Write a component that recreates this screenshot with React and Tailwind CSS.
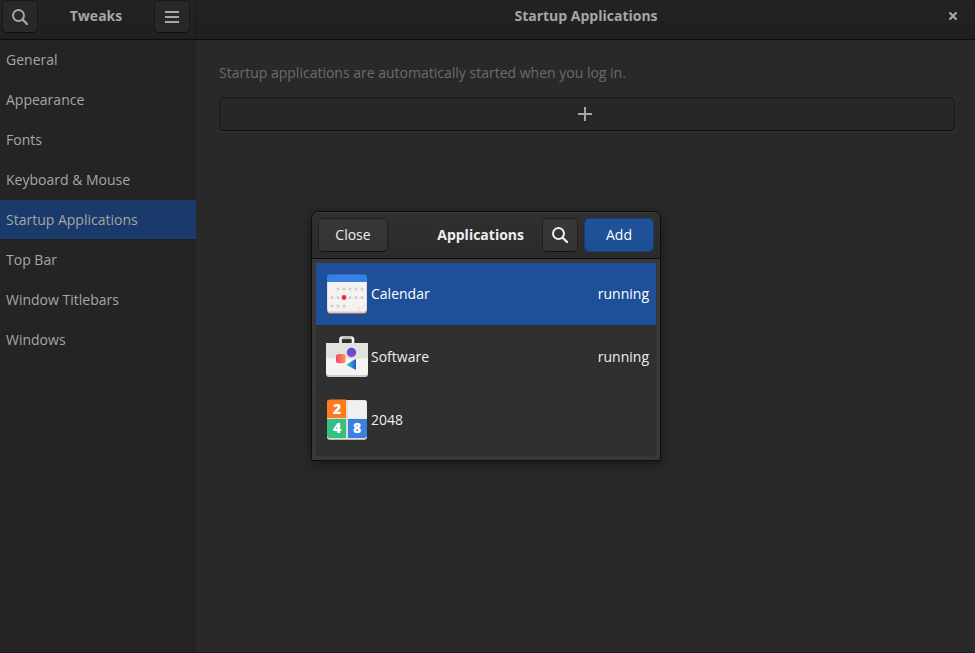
import { useState } from 'react';
import clsx from 'clsx';

const PANELS = [
  'General',
  'Appearance',
  'Fonts',
  'Keyboard & Mouse',
  'Startup Applications',
  'Top Bar',
  'Window Titlebars',
  'Windows',
];

const SearchIcon = () => (
  <svg width="16" height="16" viewBox="0 0 16 16" fill="none" stroke="currentColor" aria-hidden="true">
    <circle cx="6.5" cy="6.5" r="5.5" strokeWidth="2" />
    <path d="M10.5 10.5 15 15" strokeWidth="2.4" strokeLinecap="round" />
  </svg>
);

const MenuIcon = () => (
  <svg width="14" height="12" viewBox="0 0 14 12" fill="currentColor" aria-hidden="true">
    <path d="M0 0h14v2H0zM0 5h14v2H0zM0 10h14v2H0z" />
  </svg>
);

const PlusIcon = () => (
  <svg width="14" height="14" viewBox="0 0 14 14" fill="currentColor" aria-hidden="true">
    <path d="M6 0h2v6h6v2H8v6H6V8H0V6h6z" />
  </svg>
);

const CloseIcon = () => (
  <svg width="8" height="8" viewBox="0 0 8 8" fill="none" stroke="currentColor" aria-hidden="true">
    <path d="M1 1l6 6M7 1L1 7" strokeWidth="2.2" strokeLinecap="square" />
  </svg>
);

const CALENDAR_DOTS = [
  [15, 19], [21, 19], [27, 19], [33, 19], [39, 19],
  [9, 27.5], [15, 27.5], [27, 27.5], [33, 27.5], [39, 27.5],
  [9, 36], [15, 36], [21, 36],
];

const CalendarIcon = () => (
  <svg width="48" height="48" viewBox="0 0 48 48" aria-hidden="true">
    <rect x="4" y="8" width="40" height="36" rx="3" fill="#a8414f" />
    <rect x="4.3" y="8" width="39.4" height="35.3" rx="3" fill="#cfcdc9" />
    <path d="M4.3 11h39.4v27.5a3 3 0 0 1-3 3H7.3a3 3 0 0 1-3-3z" fill="#f4f3f2" />
    <path d="M4 12V7a3 3 0 0 1 3-3h34a3 3 0 0 1 3 3v5z" fill="#3a80e0" />
    <path d="M4.5 6.5A2.5 2.5 0 0 1 7 4.5h34a2.5 2.5 0 0 1 2.5 2" fill="none" stroke="#2f6cc4" />
    {CALENDAR_DOTS.map(([x, y]) => (
      <circle key={`${x}-${y}`} cx={x} cy={y} r="1.6" fill="#d2d0cd" />
    ))}
    <circle cx="21" cy="27.5" r="2.4" fill="#ed2b3c" />
    <path d="M43.5 33.5 35.5 41v-5" fill="none" stroke="#dddbd8" strokeWidth="0.8" />
  </svg>
);

const SoftwareIcon = () => (
  <svg width="48" height="48" viewBox="0 0 48 48" aria-hidden="true">
    <defs>
      <linearGradient id="sw-square">
        <stop offset="0" stopColor="#ef4a70" />
        <stop offset="1" stopColor="#ff9550" />
      </linearGradient>
      <linearGradient id="sw-circle" x1="0" y1="0" x2="0" y2="1">
        <stop offset="0" stopColor="#4b50e0" />
        <stop offset="1" stopColor="#9244c0" />
      </linearGradient>
      <linearGradient id="sw-triangle">
        <stop offset="0" stopColor="#38d6b8" />
        <stop offset="1" stopColor="#2257d0" />
      </linearGradient>
    </defs>
    <path d="M17.5 11V6.5a2 2 0 0 1 2-2H28a2 2 0 0 1 2 2V11" fill="none" stroke="#f4f3f2" strokeWidth="2.6" />
    <path d="M19.5 5H28" stroke="#c6c0bc" strokeWidth="2.2" />
    <path d="M3 10h42v31a3 3 0 0 1-3 3H6a3 3 0 0 1-3-3z" fill="#cfcdc9" />
    <path d="M3 10h42v29a3 3 0 0 1-3 3H6a3 3 0 0 1-3-3z" fill="#f4f4f3" />
    <path d="M3 10h42v15.5H3z" fill="#e2e3df" />
    <rect x="13" y="21" width="9.5" height="9.3" rx="2.5" fill="url(#sw-square)" />
    <circle cx="28.5" cy="19.5" r="4.7" fill="url(#sw-circle)" />
    <path d="M24 31.2 32 26.3q1-.5 1 .6v9.2q0 1-1 .5l-8-4.4q-.8-.5 0-1z" fill="url(#sw-triangle)" />
  </svg>
);

const Game2048Icon = () => (
  <svg width="48" height="48" viewBox="0 0 48 48" aria-hidden="true">
    <rect x="4" y="4" width="40" height="40" rx="3" fill="#b9b6b2" />
    <rect x="4" y="4" width="40" height="39" rx="3" fill="#deddda" />
    <path d="M25 4.5h16a2.5 2.5 0 0 1 2.5 2.5v15.5H25z" fill="#f1f0ef" />
    <path d="M4 22V6.5a3 3 0 0 1 3-3h16V22z" fill="#ff7a1f" />
    <path d="M4 23h19v19H7a3 3 0 0 1-3-3z" fill="#34c080" />
    <path d="M25 23h19v16a3 3 0 0 1-3 3H25z" fill="#3a80e0" />
    <g fill="#fff" textAnchor="middle" className="font-['Open_Sans'] text-[14px] font-extrabold">
      <text x="14" y="18">2</text>
      <text x="14" y="37">4</text>
      <text x="34" y="37">8</text>
    </g>
  </svg>
);

const APPS = [
  { name: 'Calendar', icon: CalendarIcon, running: true },
  { name: 'Software', icon: SoftwareIcon, running: true },
  { name: '2048', icon: Game2048Icon, running: false },
];

const Sidebar = ({ active, onSelect }) => (
  <nav className="w-49 flex-none bg-[#242424]">
    {PANELS.map(name => (
      <button
        key={name}
        type="button"
        onClick={() => onSelect(name)}
        className={clsx(
          'block h-10 w-full border-b border-[#212121] px-1.5 text-left',
          name === active && 'bg-[#193a6b]',
        )}
      >
        {name}
      </button>
    ))}
  </nav>
);

const ApplicationsDialog = ({ onClose }) => {
  const [selected, setSelected] = useState('Calendar');

  return (
    <div className="absolute inset-0 flex items-center justify-center pt-[19px] pr-[3px]">
      <section
        role="dialog"
        aria-label="Applications"
        className="w-[350px] overflow-hidden rounded-t-lg border border-[#0e0e0e] bg-[#383838] text-[#eeeeec] shadow-[0_3px_12px_rgba(0,0,0,0.45)]"
      >
        <header className="flex items-center gap-1.5 border-b border-[#0e0e0e] bg-linear-to-b from-[#303030] to-[#2a2a2a] p-1.5 shadow-[inset_0_1px_#3a3a3a]">
          <button
            type="button"
            onClick={onClose}
            className="h-[34px] w-[70px] rounded-[5px] border border-[#1f1f1f] border-b-[#111] bg-linear-to-b from-[#383838] to-[#333]"
          >
            Close
          </button>
          <h2 className="flex-1 pr-3 text-right font-bold">Applications</h2>
          <button
            type="button"
            aria-label="Search"
            className="flex h-[34px] w-9 items-center justify-center rounded-[5px] border border-[#1f1f1f] border-b-[#111] bg-linear-to-b from-[#383838] to-[#333]"
          >
            <SearchIcon />
          </button>
          <button
            type="button"
            className="h-[34px] w-[70px] rounded-[5px] border border-[#17407d] bg-linear-to-b from-[#1f5399] to-[#1d4e92] text-white"
          >
            Add
          </button>
        </header>
        <div className="p-1">
          <div className="bg-[#303030] pb-1">
            {APPS.map(({ name, icon: AppIcon, running }) => (
              <button
                key={name}
                type="button"
                onClick={() => setSelected(name)}
                className={clsx(
                  'flex w-full items-center border-b border-[#2c2c2c] p-[7px] text-left',
                  name === selected && 'bg-[#1e5099] text-white',
                )}
              >
                <AppIcon />
                <span className="flex-1">{name}</span>
                {running && <span>running</span>}
              </button>
            ))}
          </div>
        </div>
      </section>
    </div>
  );
};

export default function App() {
  const [panel, setPanel] = useState('Startup Applications');
  const [dialogOpen, setDialogOpen] = useState(true);

  return (
    <div className="relative flex min-h-screen flex-col border-b border-[#1b1719] bg-[#292929] font-['Open_Sans','Noto_Sans',sans-serif] text-[14px] leading-5 text-[#a6a6a4]">
      <header className="flex h-10 border-b border-[#0c0c0c] bg-linear-to-b from-[#232323] to-[#1f1f1f]">
        <div className="flex w-[197px] items-start justify-between border-r border-[#1a1a1a] pr-1.5 pl-[2px]">
          <button
            type="button"
            aria-label="Search"
            className="flex h-[33px] w-9 items-center justify-center rounded-[5px] border border-[#191919] border-b-[#0f0f0f] bg-[#282828]"
          >
            <SearchIcon />
          </button>
          <h1 className="py-1.5 font-bold">Tweaks</h1>
          <button
            type="button"
            aria-label="Menu"
            className="flex h-[33px] w-9 items-center justify-center rounded-[5px] border border-[#191919] border-b-[#0f0f0f] bg-[#282828]"
          >
            <MenuIcon />
          </button>
        </div>
        <h2 className="flex-1 py-1.5 text-center font-bold">{panel}</h2>
        <button type="button" aria-label="Close window" className="-ml-11 flex h-8 w-11 items-center justify-center">
          <CloseIcon />
        </button>
      </header>

      <div className="flex flex-1">
        <Sidebar active={panel} onSelect={setPanel} />
        <main className="flex-1 border-l border-[#2b2b2b] py-[23px] pr-[19px] pl-[21px]">
          <p className="mb-3 px-px text-[#6c6c6b]">
            Startup applications are automatically started when you log in.
          </p>
          <div className="border border-[#2d2d2d] bg-[#2b2b2b] py-px">
            <button
              type="button"
              aria-label="Add startup application"
              onClick={() => setDialogOpen(true)}
              className="flex h-[34px] w-full items-center justify-center rounded-[5px] border border-[#181818] border-b-[#0e0e0e] bg-[#272727] pr-1"
            >
              <PlusIcon />
            </button>
          </div>
        </main>
      </div>

      {dialogOpen && <ApplicationsDialog onClose={() => setDialogOpen(false)} />}
    </div>
  );
}
